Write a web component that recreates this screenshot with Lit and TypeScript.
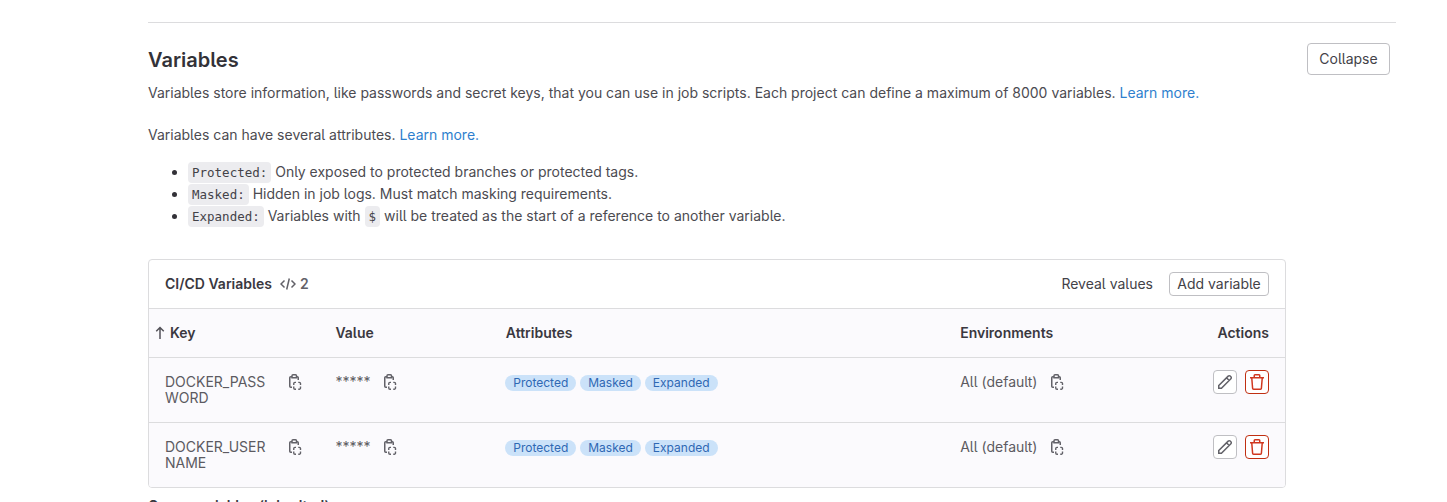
import { LitElement, html, css, svg } from "lit";
import { customElement, property } from "lit/decorators.js";

const shapes: Record<string, unknown> = {
  copy: svg`<path d="M5 13.250H3.750a1 1 0 0 1-1-1v-8.500a1 1 0 0 1 1-1H5M9.500 2.750h.750a1 1 0 0 1 1 1V6"/><path d="M5 1.750a1 1 0 0 1 1-1h2.500a1 1 0 0 1 1 1v2H5z"/><path stroke-width="1.400" d="M6.750 11V9.600a1.200 1.200 0 0 1 1.200-1.200H9M11.250 8.400h1.050a1.200 1.200 0 0 1 1.200 1.200V11M13.500 12.600V14a1.200 1.200 0 0 1-1.200 1.200h-1.050M9 15.200H7.950A1.200 1.200 0 0 1 6.750 14v-1.400"/>`,
  code: svg`<path d="M4.500 4.500 1 8l3.500 3.500M11.500 4.500 15 8l-3.500 3.500M9.300 2.500 6.700 13.500"/>`,
  pencil: svg`<path d="M1.750 14.250v-2.700L11.200 2.100a1.400 1.400 0 0 1 2 0l.7.700a1.400 1.400 0 0 1 0 2L4.450 14.250zM9.500 3.800l2.700 2.700"/>`,
  remove: svg`<path d="M1 3.750h14M5.250 3.750V1.500a.75.75 0 0 1 .75-.75h4a.75.75 0 0 1 .75.75v2.250M2.750 3.750l.85 10.500a1 1 0 0 0 1 1h6.800a1 1 0 0 0 1-1l.85-10.500"/>`,
  up: svg`<path d="M8 14V2.500M4.250 6.250 8 2.500l3.750 3.750"/>`,
};

@customElement("ui-icon")
export class UiIcon extends LitElement {
  static styles = css`
    :host { display: inline-flex; width: 16px; height: 16px; flex: none; }
    svg { width: 100%; height: 100%; fill: none; stroke: currentColor; stroke-width: 1.5; }
  `;
  @property() name = "copy";
  render() {
    return html`<svg viewBox="0 0 16 16" aria-hidden="true">${shapes[this.name]}</svg>`;
  }
}

@customElement("app-root")
export class AppRoot extends LitElement {
  static styles = css`
    :host {
      display: block; height: 502px; overflow: hidden; box-sizing: border-box; background: #fff;
      padding: 22px 51px 0 148px; color: #3a383f;
      font: 400 14px/20px Inter, "Noto Sans", sans-serif;
      font-feature-settings: "cv05";
    }
    * { box-sizing: border-box; }
    .section { border-top: 1px solid #dcdcde; padding: 20px 6px 0 0; }
    .top { display: flex; justify-content: space-between; height: 40px; }
    h2 { margin: 5px 0 0; font-size: 20px; line-height: 24px; font-weight: 600; color: #333238; }
    button {
      font: inherit; color: #434248; font-feature-settings: inherit; background: #fff;
      border: 1px solid #bfbfc3; border-radius: 4px; padding: 0;
      display: flex; align-items: center; justify-content: center;
    }
    .collapse { width: 83px; height: 32px; }
    p { margin: 0 0 22px; white-space: nowrap; color: #4c4b51; }
    a { color: #2f7fce; text-decoration: none; }
    ul { margin: -6px 0 0; padding: 0 0 0 40px; line-height: 22px; color: #4c4b51; }
    li::marker { color: #333238; }
    li { height: 22px; white-space: nowrap; }
    code {
      font: 12.500px "DejaVu Sans Mono", monospace; background: #ececef; color: #434248;
      border-radius: 4px; padding: 3px 4px;
    }
    .card { width: 1138px; margin-top: 32px; border: 1px solid #dcdcde; border-radius: 4px; overflow: hidden; }
    .head { display: flex; align-items: center; height: 48px; padding: 0 16px; }
    .title { font-weight: 600; }
    .count { display: flex; align-items: center; gap: 4px; margin-left: 8px; color: #626168; font-weight: 600; }
    .actions { display: flex; align-items: center; gap: 16px; margin-left: auto; color: #434248; }
    .add { width: 100px; height: 24px; }
    .row {
      display: grid; grid-template-columns: 15% 15% 40% 20% 10%;
      height: 65px; border-top: 1px solid #dcdcde; background: #fbfafd; color: #5c5a61;
    }
    .labels { height: 49px; font-weight: 600; color: #3a383f; }
    .labels .cell { padding-top: 14px; }
    .cell { padding: 12px 16px 0; display: flex; align-items: flex-start; }
    .labels .sort { padding-left: 3px; gap: 2px; }
    .sort ui-icon { margin-top: 2px; color: #535158; }
    .name { width: 106px; line-height: 16px; padding-top: 4px; white-space: pre-line; }
    .value { line-height: 24px; }
    .copy { margin: 4px 0 0 12px; color: #626168; }
    .copy.key { margin-left: 16px; }
    .end { justify-content: flex-end; gap: 8px; }
    .row .tags { gap: 4px; padding-top: 17px; padding-left: 15.500px; }
    .tag { height: 16px; border-radius: 8px; padding: 0 8px; font-size: 12px; line-height: 16px; background: #cbe2f9; color: #2f68b4; }
    .square { width: 24px; height: 24px; }
    .edit { color: #626168; }
    .danger { color: #d0371f; border-color: #c02f12; }
    h3 { margin: 8px 0 0; font-size: 14px; line-height: 20px; font-weight: 600; }
  `;

  private variables = ["DOCKER_PASS\nWORD", "DOCKER_USER\nNAME"];

  render() {
    return html`
      <section class="section">
        <div class="top">
          <h2>Variables</h2>
          <button class="collapse">Collapse</button>
        </div>
        <p>Variables store information, like passwords and secret keys, that you can use in job scripts. Each project can define a maximum of 8000 variables. <a>Learn more.</a></p>
        <p>Variables can have several attributes. <a>Learn more.</a></p>
        <ul>
          <li><code>Protected:</code> Only exposed to protected branches or protected tags.</li>
          <li><code>Masked:</code> Hidden in job logs. Must match masking requirements.</li>
          <li><code>Expanded:</code> Variables with <code>$</code> will be treated as the start of a reference to another variable.</li>
        </ul>
        <div class="card">
          <div class="head">
            <span class="title">CI/CD Variables</span>
            <span class="count"><ui-icon name="code"></ui-icon>2</span>
            <div class="actions"><span>Reveal values</span><button class="add">Add variable</button></div>
          </div>
          <div class="row labels">
            <div class="cell sort"><ui-icon name="up"></ui-icon>Key</div>
            <div class="cell">Value</div>
            <div class="cell">Attributes</div>
            <div class="cell">Environments</div>
            <div class="cell end">Actions</div>
          </div>
          ${this.variables.map((name) => html`
            <div class="row">
              <div class="cell"><span class="name">${name}</span><ui-icon class="copy key"></ui-icon></div>
              <div class="cell"><span class="value">*****</span><ui-icon class="copy"></ui-icon></div>
              <div class="cell tags">
                <span class="tag">Protected</span><span class="tag">Masked</span><span class="tag">Expanded</span>
              </div>
              <div class="cell"><span class="value">All (default)</span><ui-icon class="copy"></ui-icon></div>
              <div class="cell end">
                <button class="square edit" aria-label="Edit"><ui-icon name="pencil"></ui-icon></button>
                <button class="square danger" aria-label="Delete"><ui-icon name="remove"></ui-icon></button>
              </div>
            </div>`)}
        </div>
        <h3>Group variables (inherited)</h3>
      </section>
    `;
  }
}
